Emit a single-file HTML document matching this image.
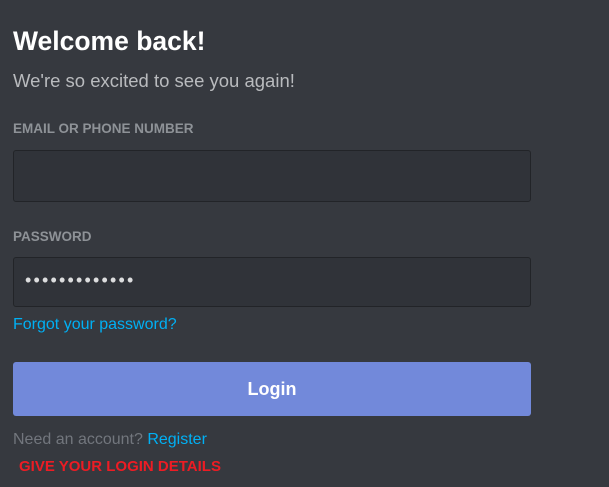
<html><head><style>
body{margin:0;width:609px;height:487px;background:#36393f;font-family:"Liberation Sans",sans-serif;position:relative;overflow:hidden}
div{position:absolute;white-space:nowrap}
.in{left:13px;width:516px;background:#303339;border:1px solid #222428;border-radius:3px}
.lb{left:13px;font-size:13.5px;font-weight:bold;color:#8e9297}
</style></head><body>
<div style="left:13px;top:26px;font-size:26.5px;font-weight:bold;color:#fff">Welcome back!</div>
<div style="left:13px;top:70px;font-size:18.5px;color:#b9bbbe">We're so excited to see you again!</div>
<div class="lb" style="top:121px">EMAIL OR PHONE NUMBER</div>
<div class="in" style="top:150px;height:50px"></div>
<div class="lb" style="top:229px">PASSWORD</div>
<div class="in" style="top:257px;height:48px"></div>
<div style="left:25px;top:270px;font-size:18px;color:#dcddde;letter-spacing:2.2px">•••••••••••••</div>
<div style="left:13px;top:316px;font-size:16px;color:#00b0f4">Forgot your password?</div>
<div style="left:13px;top:362px;width:518px;height:54px;background:#7289da;border-radius:3px;color:#fff;font-size:18px;font-weight:bold;text-align:center;line-height:54px">Login</div>
<div style="left:13px;top:431px;font-size:16px;color:#72767d">Need an account? <span style="color:#00b0f4">Register</span></div>
<div style="left:19px;top:458px;font-size:15px;font-weight:bold;color:#ed1c24">GIVE YOUR LOGIN DETAILS</div>
</body></html>
